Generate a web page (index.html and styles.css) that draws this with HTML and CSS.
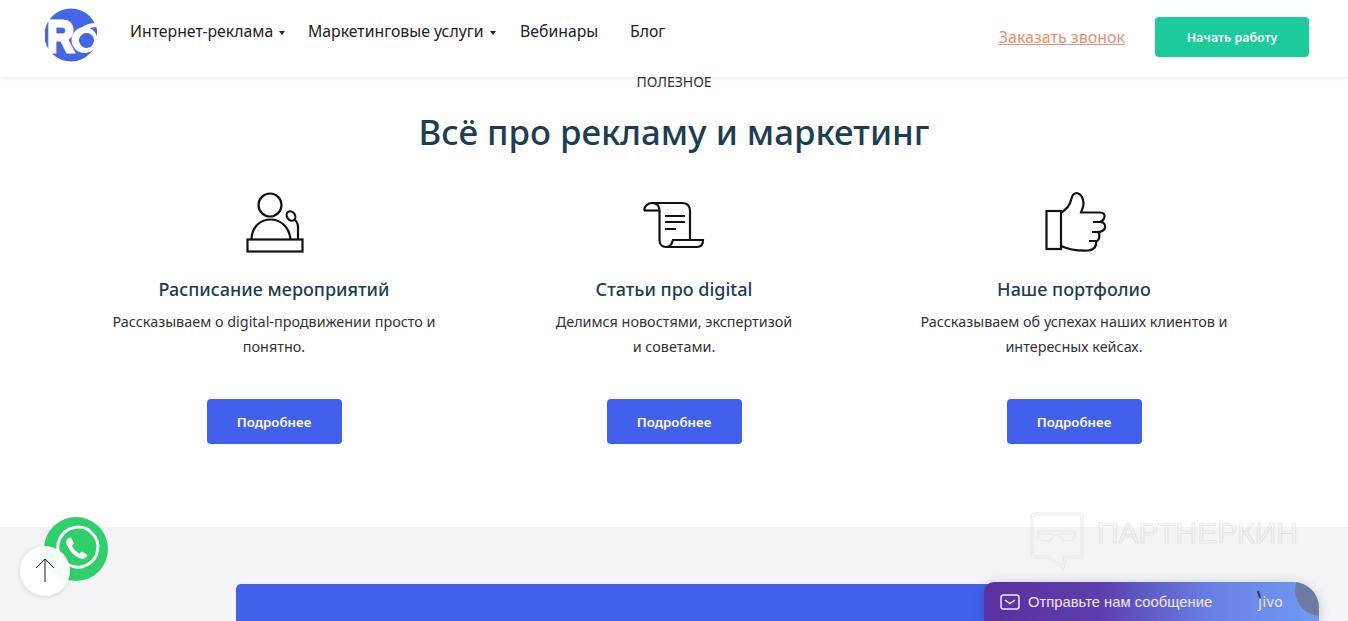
FILE: index.html
```html
<!DOCTYPE html>
<html lang="ru">
<head>
<meta charset="utf-8">
<title>R6</title>
<link rel="stylesheet" href="styles.css">
</head>
<body>
<header class="header">
  <a class="logo" href="#">
    <svg width="52" height="57" viewBox="0 0 52 57">
      <circle cx="26" cy="28" r="26.500" fill="#4466e4"/>
      <text x="2" y="45" class="logo-r" textLength="27" lengthAdjust="spacingAndGlyphs">R</text>
      <circle cx="39.500" cy="33" r="13" fill="#fff"/>
      <circle cx="41.500" cy="33.500" r="7.500" fill="#4466e4"/>
      <path d="M27 33 C30 22 41 16 51 16 L52 20 C44 20 38 24 34 31Z" fill="#fff"/>
    </svg>
  </a>
  <nav class="nav">
    <a class="nav-link" href="#">Интернет-реклама <span class="caret"></span></a>
    <a class="nav-link" href="#">Маркетинговые услуги <span class="caret"></span></a>
    <a class="nav-link" href="#">Вебинары</a>
    <a class="nav-link" href="#">Блог</a>
  </nav>
  <div class="header-actions">
    <a class="callback" href="#">Заказать звонок</a>
    <a class="btn btn-green" href="#">Начать работу</a>
  </div>
</header>

<main>
  <section class="useful">
    <p class="eyebrow">ПОЛЕЗНОЕ</p>
    <h1 class="title">Всё про рекламу и маркетинг</h1>
    <div class="cards">
      <article class="card">
        <svg class="card-icon" width="110" height="80" viewBox="0 0 110 80" fill="none" stroke="#111" stroke-width="2.200">
          <circle cx="50" cy="25" r="11.500"/>
          <path d="M31.500 59 C32 47 40 39.500 50.500 39.500 C61 39.500 69 47 70.500 59"/>
          <rect x="27.500" y="59.500" width="55" height="12"/>
          <ellipse cx="71" cy="36" rx="4" ry="5" transform="rotate(-35 71 36)"/>
          <path d="M74.500 39.500 C77.500 42 78 44 78 47 V59"/>
        </svg>
        <h2 class="card-title">Расписание мероприятий</h2>
        <p class="card-text">Рассказываем о digital-продвижении просто и понятно.</p>
        <a class="btn btn-blue" href="#">Подробнее</a>
      </article>
      <article class="card">
        <svg class="card-icon" width="110" height="80" viewBox="0 0 110 80" fill="none" stroke="#111" stroke-width="2.200">
          <path d="M24 30.500 C24.500 26 28 23 32 23 H62 C67 23 70 26 70 31 V60 H83 C83 64 81 67 77 67 H46 C42 67 39.500 64 39.500 60 V31 C39.500 26 37 23 32 23"/>
          <path d="M24 30.500 H39.500"/>
          <path d="M46 67 C50 67 52 64 53 60 H70"/>
          <path d="M45 36 H65 M45 42 H65 M45 49 H56"/>
        </svg>
        <h2 class="card-title">Статьи про digital</h2>
        <p class="card-text">Делимся новостями, экспертизой<br>и советами.</p>
        <a class="btn btn-blue" href="#">Подробнее</a>
      </article>
      <article class="card">
        <svg class="card-icon" width="110" height="80" viewBox="0 0 110 80" fill="none" stroke="#111" stroke-width="2.200">
          <rect x="26.500" y="31" width="14.500" height="38"/>
          <path d="M41 33 C46 29 50 26 51 20 C52 15 54 13 57 13 C61 14 63 18 63.500 23 C64 27 62 29 61 32.500 H80 C84 32.500 85 35 84.500 37 C84 39 83 41 80 42 H73 H80 C85 42 86 46 84.500 49 C83 51 81 52 78 52 H72 H78 C80 54 80 59 77 61 H69 H76 C77 66 74 70 68 70.500 C58 71 50 70 41 66"/>
        </svg>
        <h2 class="card-title">Наше портфолио</h2>
        <p class="card-text">Рассказываем об успехах наших клиентов и интересных кейсах.</p>
        <a class="btn btn-blue" href="#">Подробнее</a>
      </article>
    </div>
  </section>
  <section class="grey">
    <div class="blue-card"></div>
  </section>
</main>

<div class="whatsapp">
  <svg width="64" height="64" viewBox="0 0 64 64">
    <circle cx="32" cy="32" r="32" fill="#2fd06a"/>
    <path d="M13.500 50.500 L16.500 40 A20 20 0 1 1 24 47.500 Z" fill="none" stroke="#fff" stroke-width="3"/>
    <path d="M24 21 C22 23 21.500 26 24 30 C27 36 31 39.500 37 41.500 C40 42.300 42.500 40.500 43.500 38 L38 34.500 L35.500 36.500 C32 35 29.500 32 28 29 L30 26.500 L27 20.500 Z" fill="#fff"/>
  </svg>
</div>
<a class="to-top" href="#">
  <svg width="22" height="30" viewBox="0 0 22 30" fill="none">
    <path d="M11 3 V26" stroke="#666" stroke-width="1.500"/>
    <path d="M2 12 L11 3 L20 12" stroke="#222" stroke-width="1"/>
  </svg>
</a>

<div class="watermark">
  <svg width="54" height="58" viewBox="0 0 54 58" fill="none" stroke="#e6e8ea" stroke-width="1">
    <path d="M4 1 H50 Q53 1 53 4 V43 Q53 46 50 46 H36 L34 57 L17 46 H4 Q1 46 1 43 V4 Q1 1 4 1Z"/>
    <path d="M6 3 H48 Q51 3 51 6 V41 Q51 44 48 44 H34 L32.500 53 L18 44 H6 Q3 44 3 41 V6 Q3 3 6 3Z"/>
    <path d="M8 19 H45 V23 C45 27 41 29 37 29 C33 29 31 27 30 23 H24 C23 27 20 29 16 29 C12 29 8 27 8 23Z"/>
    <path d="M8 22 H23 M30 22 H45"/>
  </svg>
  <span class="watermark-text">ПАРТНЕРКИН</span>
</div>

<div class="jivo">
  <svg width="20" height="16" viewBox="0 0 20 16" fill="none" stroke="#f0e9fb" stroke-width="1.500">
    <rect x="1" y="1" width="18" height="14" rx="2.500"/>
    <path d="M5 6 L10 9.500 L15 6"/>
  </svg>
  <span class="jivo-text">Отправьте нам сообщение</span>
  <span class="jivo-brand">jivo</span>
  <span class="jivo-corner"></span>
</div>
</body>
</html>
```
FILE: styles.css
```css
* { box-sizing: border-box; }
html, body { margin: 0; padding: 0; }
body {
  height: 621px;
  overflow: hidden;
  background: #fff;
  font-family: "Noto Sans", "Open Sans", sans-serif;
  color: #1b1b1b;
  position: relative;
}
a { text-decoration: none; color: inherit; }

.header {
  height: 77px;
  display: flex;
  align-items: flex-start;
  padding: 7px 39px 0 45px;
  background: #fff;
  box-shadow: 0 1px 4px rgba(0, 0, 0, .1);
  position: relative;
}
.logo { width: 52px; height: 57px; display: block; }
.logo svg { display: block; }
.logo-r {
  font-family: "Liberation Sans", sans-serif;
  font-weight: 700;
  font-size: 45px;
  fill: #fff;
  stroke: #fff;
  stroke-width: 3px;
}
.nav {
  display: flex;
  margin: 13px 0 0 33px;
  font-size: 15.800px;
  line-height: 22px;
  color: #222;
}
.nav-link { white-space: nowrap; }
.nav-link:nth-child(1) { width: 178px; }
.nav-link:nth-child(2) { width: 212px; }
.nav-link:nth-child(3) { width: 110px; }
.caret {
  display: inline-block;
  vertical-align: middle;
  margin-left: 2px;
  border-left: 3px solid transparent;
  border-right: 3px solid transparent;
  border-top: 4px solid #222;
}
.header-actions {
  margin-left: auto;
  display: flex;
  align-items: center;
  gap: 30px;
  margin-top: 10px;
}
.callback {
  color: #e8906f;
  text-decoration: underline;
  font-size: 16px;
  line-height: 20px;
  width: 127px;
  text-align: right;
  white-space: nowrap;
}
.btn {
  display: flex;
  align-items: center;
  justify-content: center;
  color: #fff;
  font-weight: 600;
  border-radius: 4px;
  font-size: 13.300px;
}
.btn-green { width: 154px; height: 40px; background: #1ccb9b; font-size: 12.400px; }
.btn-blue { width: 135px; height: 45px; background: #4161ec; }

.useful { height: 450px; text-align: center; }
.eyebrow {
  margin: 0;
  font-size: 14px;
  line-height: 10px;
  color: #333;
}
.title {
  margin: 23px 0 0;
  font-size: 34.800px;
  line-height: 44px;
  font-weight: 500;
  color: #1d3d50;
}
.cards {
  display: grid;
  grid-template-columns: repeat(3, 400px);
  justify-content: center;
  margin-top: 26px;
}
.card { display: flex; flex-direction: column; align-items: center; }
.card-icon { display: block; margin-left: 2px; }
.card-title {
  margin: 14px 0 0;
  font-size: 18px;
  line-height: 30px;
  font-weight: 500;
  color: #1d3d50;
}
.card-text {
  margin: 5px 0 0;
  width: 340px;
  height: 50px;
  font-size: 14.400px;
  line-height: 25px;
  color: #333;
}
.card .btn { margin-top: 40px; }

.grey {
  height: 94px;
  background: #f3f4f6;
  padding: 57px 236px 0;
}
.blue-card {
  height: 60px;
  background: #4161ec;
  border-radius: 5px 5px 0 0;
}

.whatsapp {
  position: absolute;
  left: 44px;
  top: 517px;
  width: 64px;
  height: 64px;
}
.whatsapp svg { display: block; }
.to-top {
  position: absolute;
  left: 20px;
  top: 546px;
  width: 50px;
  height: 50px;
  border-radius: 50%;
  background: rgba(255, 255, 255, .93);
  box-shadow: 0 1px 5px rgba(0, 0, 0, .12);
  display: flex;
  align-items: center;
  justify-content: center;
}
.watermark {
  position: absolute;
  left: 1030px;
  top: 512px;
  display: flex;
  align-items: flex-start;
  gap: 13px;
}
.watermark-text {
  margin-top: 3px;
  font-family: "Liberation Sans", sans-serif;
  font-size: 30px;
  line-height: 36px;
  color: transparent;
  -webkit-text-stroke: .7px #dcdee1;
  white-space: nowrap;
}
.jivo {
  position: absolute;
  left: 984px;
  top: 582px;
  width: 335px;
  height: 39px;
  border-radius: 10px 26px 0 0;
  background: linear-gradient(90deg, #5b2f9f 0%, #5c3fae 35%, #6a80e6 68%, #6f9bf0 100%);
  box-shadow: 0 2px 12px rgba(0, 0, 0, .2);
  display: flex;
  align-items: center;
  padding-left: 16px;
  overflow: hidden;
  color: #f0e9fb;
}
.jivo-text {
  margin-left: 8px;
  font-family: "Liberation Sans", sans-serif;
  font-size: 14.800px;
  white-space: nowrap;
}
.jivo-brand {
  position: relative;
  margin-left: 46px;
  font-size: 14px;
  letter-spacing: .6px;
}
.jivo-brand::before {
  content: "";
  position: absolute;
  left: 0;
  top: -1px;
  width: 2px;
  height: 7px;
  background: #2c3560;
  transform: rotate(-20deg);
}
.jivo-corner {
  position: absolute;
  right: -28px;
  top: -18px;
  width: 52px;
  height: 52px;
  border-radius: 50%;
  background: #6f7a9e;
}
```
